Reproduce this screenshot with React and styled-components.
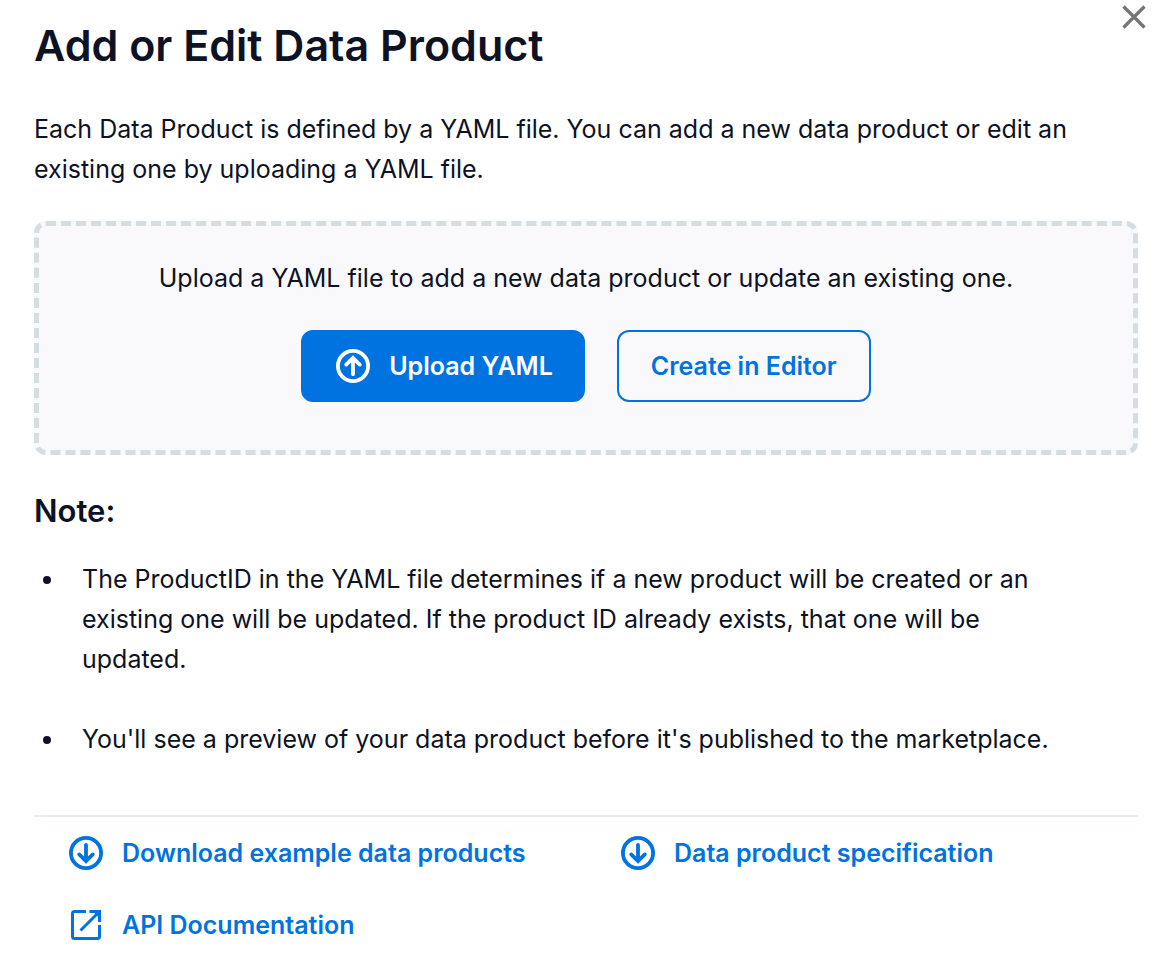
import React from 'react'
import styled, { createGlobalStyle } from 'styled-components'


function App() {
  return (
    <>
      <GlobalStyle />
      <Dialog role='dialog' aria-labelledby='dialog-title'>

        <Header>
          <Title id='dialog-title'>Add or Edit Data Product</Title>
          <CloseButton type='button' aria-label='Close'>
            <CloseIcon />
          </CloseButton>
        </Header>

        <Content>
          <Text>
            Each Data Product is defined by a YAML file. You can add a new data product or edit an
            existing one by uploading a YAML file.
          </Text>

          <DropZone>
            <Text>Upload a YAML file to add a new data product or update an existing one.</Text>
            <ButtonGroup>
              <UploadButton type='button'>
                <UploadIcon />
                Upload YAML
              </UploadButton>
              <EditorButton type='button'>Create in Editor</EditorButton>
            </ButtonGroup>
          </DropZone>

          <NoteTitle>Note:</NoteTitle>
          <NoteList>
            <NoteItem>
              The ProductID in the YAML file determines if a new product will be created or an
              existing one will be updated. If the product ID already exists, that one will be
              updated.
            </NoteItem>
            <NoteItem>
              You'll see a preview of your data product before it's published to the marketplace.
            </NoteItem>
          </NoteList>

          <Links>
            <LinkItem href='#examples'><DownloadIcon />Download example data products</LinkItem>
            <LinkItem href='#specification'><DownloadIcon />Data product specification</LinkItem>
            <LinkItem href='#api'><ExternalIcon />API Documentation</LinkItem>
          </Links>
        </Content>

      </Dialog>
    </>
  )
}

export default App


function CloseIcon() {
  return (
    <svg width='24' height='24' viewBox='0 0 24 24' fill='none' stroke='currentColor' strokeWidth='3.2' aria-hidden='true'>
      <path d='M1.5 1.5 22.5 22.5M22.5 1.5 1.5 22.5' />
    </svg>
  )
}

function UploadIcon() {
  return (
    <Icon viewBox='0 0 40 40' aria-hidden='true'>
      <circle cx='20' cy='20' r='15.1' />
      <path d='M20 28.2V12.5M13.2 18.6 20 12l6.8 6.6' strokeLinecap='round' />
    </Icon>
  )
}

function DownloadIcon() {
  return (
    <Icon viewBox='0 0 40 40' aria-hidden='true'>
      <circle cx='20' cy='20' r='15.1' />
      <path d='M20 11.8V27.5M13.2 21.4 20 28l6.8-6.6' strokeLinecap='round' />
    </Icon>
  )
}

function ExternalIcon() {
  return (
    <Icon $thin viewBox='0 0 40 40' aria-hidden='true'>
      <path d='M20 6.5H8.5a2 2 0 0 0-2 2v23a2 2 0 0 0 2 2h23a2 2 0 0 0 2-2V20' />
      <path d='M14.5 25.5 32.5 7.5M23.5 6.5h10V17' />
      <path d='M27 6.5h6.5V13Z' fill='currentColor' stroke='none' />
    </Icon>
  )
}


const GlobalStyle = createGlobalStyle`
  * {
    box-sizing: border-box;
    margin: 0;
    padding: 0;
  }

  body {
    background: #fff;
    color: #0d1224;
    font-family: Inter, sans-serif;
    font-size: 25px;
    line-height: 40px;
  }

  button {
    font: inherit;
    cursor: pointer;
  }
`

const Dialog = styled.main`
  width: 100%;
`

const Header = styled.header`
  display: flex;
  align-items: flex-start;
  justify-content: space-between;
  padding: 0 8px 0 34px;
`

const Title = styled.h1`
  padding-top: 15px;
  font-size: 43px;
  font-weight: 600;
  line-height: 60px;
`

const CloseButton = styled.button`
  display: flex;
  padding: 5px 6px;
  border: none;
  background: none;
  color: #757575;
`

const Content = styled.div`
  padding: 34px 22px 0 34px;
`

const Text = styled.p``

const DropZone = styled.section`
  margin-top: 32px;
  padding: 32px 28px 48px;
  border: 5px dashed #d4dde1;
  border-radius: 12px;
  background: #f9f9fc;
  text-align: center;
`

const ButtonGroup = styled.div`
  display: flex;
  flex-wrap: wrap;
  justify-content: center;
  gap: 32px;
  margin-top: 32px;
`

const Button = styled.button`
  display: flex;
  align-items: center;
  gap: 16px;
  height: 72px;
  padding: 0 32px;
  border: 2px solid #0073e0;
  border-radius: 12px;
  font-weight: 600;
`

const UploadButton = styled(Button)`
  padding: 0 30px;
  background: #0073e0;
  color: #fff;
`

const EditorButton = styled(Button)`
  background: transparent;
  color: #0073e0;
`

const Icon = styled.svg`
  flex: none;
  width: 40px;
  height: 40px;
  fill: none;
  stroke: currentColor;
  stroke-width: ${props => props.$thin ? '3' : '3.8'};
`

const NoteTitle = styled.h2`
  margin-top: 36px;
  font-size: 31px;
  font-weight: 600;
  line-height: 40px;
`

const NoteList = styled.ul`
  display: grid;
  gap: 40px;
  margin-top: 28px;
  list-style: none;
`

const NoteItem = styled.li`
  display: flex;
  padding: 0 56px 0 9px;

  &::before {
    content: '';
    flex: none;
    width: 8px;
    height: 8px;
    margin: 17px 31px 0 0;
    border-radius: 50%;
    background: currentColor;
  }
`

const Links = styled.nav`
  display: grid;
  grid-template-columns: 1fr 1fr;
  margin-top: 56px;
  border-top: 2px solid #e6ebee;
`

const LinkItem = styled.a`
  display: flex;
  align-items: center;
  gap: 16px;
  height: 72px;
  padding-left: 32px;
  color: #0073e0;
  font-weight: 600;
  text-decoration: none;
`
